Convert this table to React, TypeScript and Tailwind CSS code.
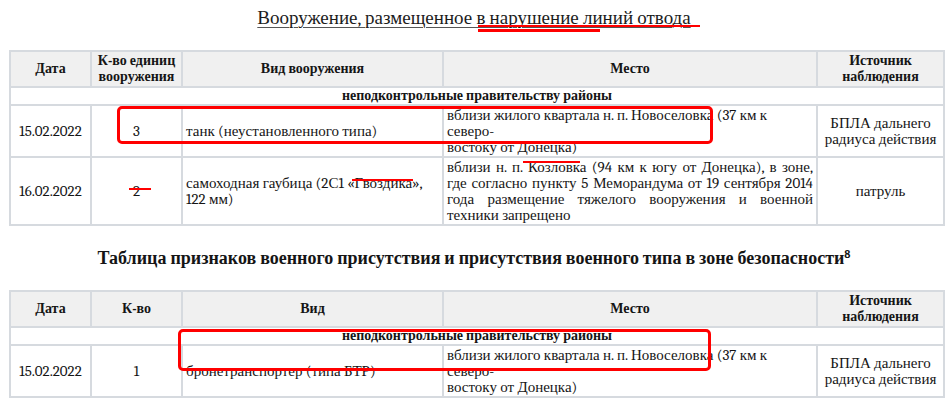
const widths = ["w-[81px]", "w-[91px]", "w-[261px]", "w-[374px]", "w-[127px]"];
const cell = "border-2 border-[#d6dadf] px-[3px] py-px align-middle font-serif";

function DataTable({ headers, rows }) {
  return (
    <table className="mx-[9px] w-[934px] table-fixed border-collapse border-2 border-[#d6dadf] font-serif text-[15px] leading-[16px] text-[#151515]">
      <colgroup>
        {widths.map((w) => (
          <col key={w} className={w} />
        ))}
      </colgroup>
      <thead>
        <tr className="bg-[#f0f0f0]">
          {headers.map((h, i) => (
            <th key={i} className="h-[36px] border-2 border-[#d6dadf] px-[3px] py-0 text-center align-middle font-serif text-[14px] font-bold leading-[16px]">
              {h}
            </th>
          ))}
        </tr>
      </thead>
      <tbody>
        <tr>
          <td colSpan={5} className="h-[16px] border-2 border-[#d6dadf] p-0 text-center font-serif text-[14px] font-bold leading-[16px]">
            неподконтрольные правительству районы
          </td>
        </tr>
        {rows.map((r) => (
          <tr key={r.date}>
            <td className={cell + " text-center"}>{r.date}</td>
            <td className={cell + " text-center"}>{r.qty}</td>
            <td className={cell + " text-left"}>{r.kind}</td>
            <td className={cell + (r.justify ? " text-justify" : " text-left")}>{r.place}</td>
            <td className={cell + " text-center"}>{r.source}</td>
          </tr>
        ))}
      </tbody>
    </table>
  );
}

const novoselovka = (
  <>
    вблизи жилого квартала н. п. Новоселовка (37 км к северо-
    <br />
    востоку от Донецка)
  </>
);

const bpla = (
  <>
    БПЛА дальнего
    <br />
    радиуса действия
  </>
);

const source = (
  <>
    Источник
    <br />
    наблюдения
  </>
);

export default function App() {
  return (
    <div className="bg-white font-serif">
      <div className="relative h-[398px] w-[948px]">
        <div className="h-[50px] pt-[6px] text-center font-serif text-[19px] leading-[24px] text-[#1c1c1c]">
          <span className="underline decoration-[#555] decoration-1 underline-offset-[3px]">
            Вооружение, размещенное в нарушение линий отвода
          </span>
        </div>

        <DataTable
          headers={[
            "Дата",
            <>
              К-во единиц
              <br />
              вооружения
            </>,
            "Вид вооружения",
            "Место",
            source,
          ]}
          rows={[
            { date: "15.02.2022", qty: "3", kind: "танк (неустановленного типа)", place: novoselovka, source: bpla },
            {
              date: "16.02.2022",
              qty: "2",
              kind: "самоходная гаубица (2С1 «Гвоздика», 122 мм)",
              place:
                "вблизи н. п. Козловка (94 км к югу от Донецка), в зоне, где согласно пункту 5 Меморандума от 19 сентября 2014 года размещение тяжелого вооружения и военной техники запрещено",
              source: "патруль",
              justify: true,
            },
          ]}
        />

        <div className="flex h-[64px] items-center justify-center font-serif text-[18px] font-bold text-[#151515]">
          <span>
            Таблица признаков военного присутствия и присутствия военного типа в зоне безопасности
            <sup className="text-[11px]">8</sup>
          </span>
        </div>

        <DataTable
          headers={["Дата", "К-во", "Вид", "Место", source]}
          rows={[{ date: "15.02.2022", qty: "1", kind: "бронетранспортер (типа БТР)", place: novoselovka, source: bpla }]}
        />

        {/* red annotations drawn over the document */}
        <div className="absolute left-[478px] top-[25px] h-[2px] w-[222px] bg-[#ff0000]" />
        <div className="absolute left-[478px] top-[29px] h-[3px] w-[122px] bg-[#ff0000]" />
        <div className="absolute left-[117px] top-[106px] h-[38px] w-[596px] rounded-[5px] border-[3px] border-[#ff0000]" />
        <div className="absolute left-[129px] top-[188px] h-[2px] w-[22px] bg-[#ff0000]" />
        <div className="absolute left-[352px] top-[179px] h-[2px] w-[61px] bg-[#ff0000]" />
        <div className="absolute left-[523px] top-[161px] h-[2px] w-[57px] bg-[#ff0000]" />
        <div className="absolute left-[178px] top-[329px] h-[42px] w-[533px] rounded-[5px] border-[3px] border-[#ff0000]" />
      </div>
    </div>
  );
}
